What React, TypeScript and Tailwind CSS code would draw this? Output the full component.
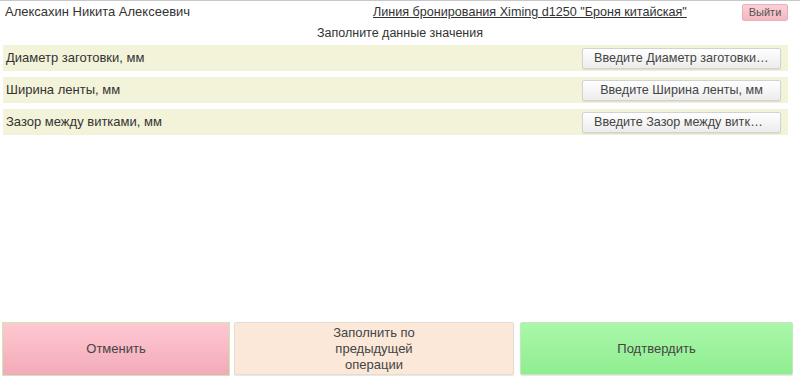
export default function App() {
  const rows = [
    { label: "Диаметр заготовки, мм", btn: "Введите Диаметр заготовки, мм" },
    { label: "Ширина ленты, мм", btn: "Введите Ширина ленты, мм" },
    { label: "Зазор между витками, мм", btn: "Введите Зазор между витками, мм" },
  ];

  return (
    <div className="flex h-[379px] w-[800px] flex-col bg-white font-['Liberation_Sans',Arial,sans-serif] text-[#333] border-t border-[#c8c8c8]">
      <div className="flex h-[22px] items-center pl-[5px] pr-[12px] text-[13px]">
        <div className="w-[368px] truncate">Алексахин Никита Алексеевич</div>
        <div className="flex-1 text-[12.6px] underline">Линия бронирования Ximing d1250 "Броня китайская"</div>
        <button className="h-[17px] w-[46px] rounded-[2px] border border-[#e8b0b8] bg-gradient-to-b from-[#fbd0d8] to-[#f4b8c2] text-[11px] leading-none text-[#555]">
          Выйти
        </button>
      </div>
      <div className="mt-[1px] text-center text-[12.5px] leading-[18px]">Заполните данные значения</div>
      <div className="mt-[3px] flex flex-col gap-[6px] pl-[3px] pr-[12px]">
        {rows.map((r) => (
          <div key={r.label} className="flex h-[26px] items-center bg-[#f3f3da] pl-[3px] pr-[7px] text-[13px]">
            <div className="flex-1">{r.label}</div>
            <button className="h-[21px] w-[199px] truncate rounded-[2px] border border-[#d2d2d2] bg-gradient-to-b from-[#ffffff] to-[#ececec] px-[11px] text-[12.6px] text-[#444] shadow-[0_1px_1px_rgba(0,0,0,0.08)]">
              {r.btn}
            </button>
          </div>
        ))}
      </div>
      <div className="flex-1" />
      <div className="mb-[3px] flex h-[54px] px-[2px] text-[13px] text-[#444]">
        <button className="w-[228px] border border-[#c8eab0] bg-gradient-to-b from-[#ffc8d2] to-[#f2aab8]">
          Отменить
        </button>
        <button className="mb-[1px] ml-[4px] w-[280px] rounded-[2px] border border-[#e4dcd0] bg-[#fbe8d8] leading-[16px] shadow-[0_1px_1px_rgba(0,0,0,0.1)]">
          Заполнить по
          <br />
          предыдущей
          <br />
          операции
        </button>
        <button className="mb-[1px] ml-[6px] w-[273px] rounded-[2px] border border-[#c6e6c0] bg-gradient-to-b from-[#aaf7aa] to-[#90ee90] shadow-[0_1px_1px_rgba(0,0,0,0.1)]">
          Подтвердить
        </button>
      </div>
    </div>
  );
}
